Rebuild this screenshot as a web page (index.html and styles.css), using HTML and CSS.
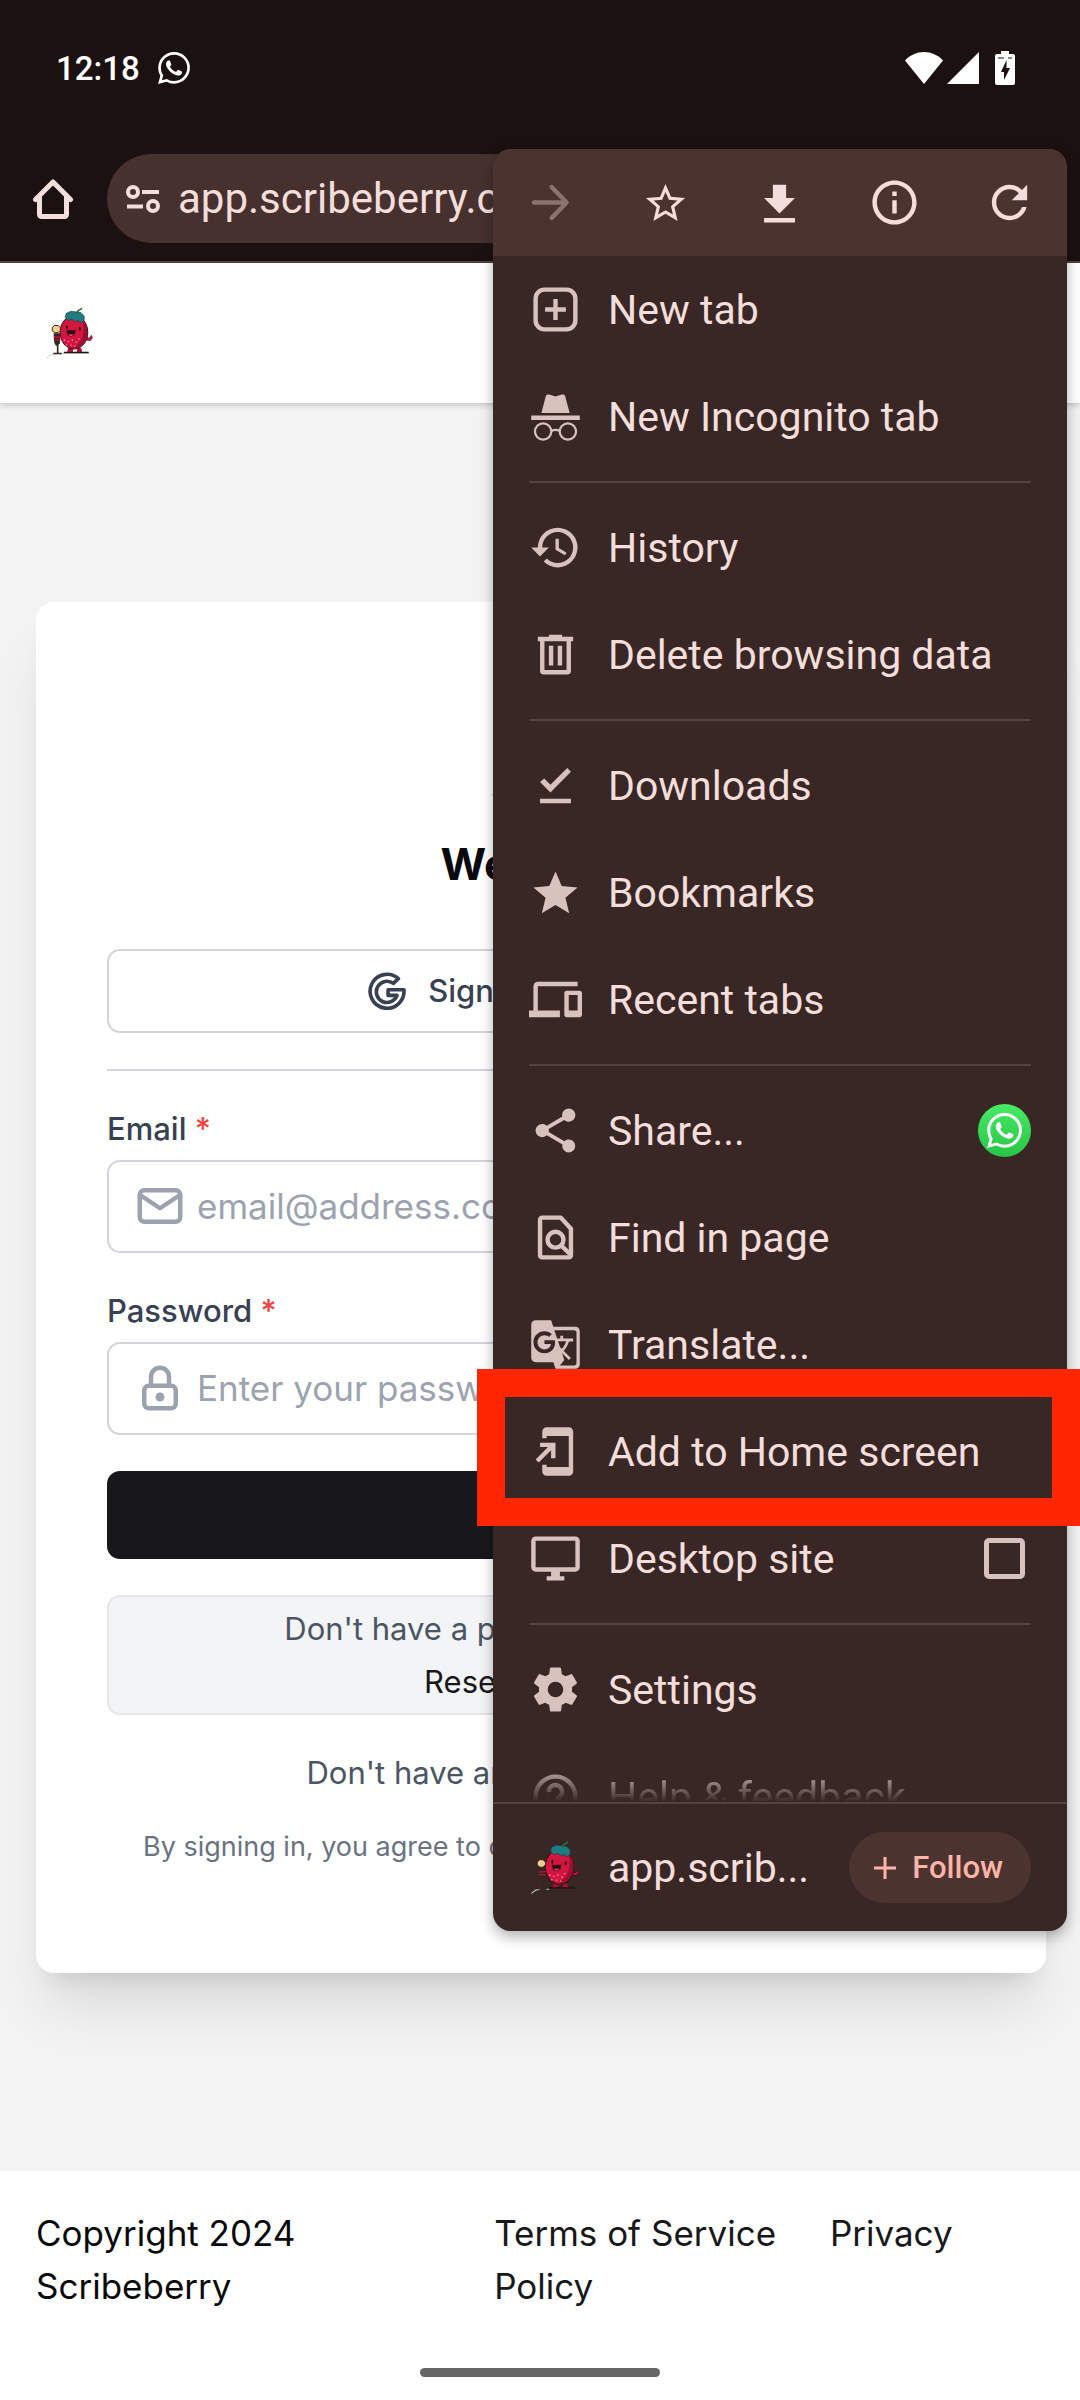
FILE: index.html
```html
<!DOCTYPE html>
<html lang="en">
<head>
  <meta charset="UTF-8">
  <meta name="viewport" content="width=device-width, initial-scale=1.0">
  <title>Scribeberry</title>
  <link rel="stylesheet" href="styles.css">
</head>
<body>
  <!-- shared drawings -->
  <svg class="symbols" width="0" height="0" aria-hidden="true">
    <symbol id="berry" viewBox="20 50 146 156">
      <path d="M22 204l12-9 14-3M64 192h10" stroke="#b9dccd" stroke-width="3" fill="none"/>
      <path d="M74 185h76v5H74z" fill="#24130f"/>
      <path d="M88 174h14v12H84zM114 174h13l3 12h-16z" fill="#a70f33"/>
      <path d="M140 140l12 4 6-9 3 8-6 8-16-2z" fill="#d3163f" stroke="#3a0c18" stroke-width="2"/>
      <ellipse cx="105" cy="126" rx="42" ry="51" fill="#d3163f" stroke="#3a0c18" stroke-width="3"/>
      <path d="M128 82c22 22 26 66-4 86-8 6-16 8-24 8 34-20 42-54 28-94z" fill="#9a1034"/>
      <path d="M78 80l4-12 14-6 16 2 14 2 10 10v14l-10 6-8-6-10 4-8-8-12 4-8-8z" fill="#207a80" stroke="#12404a" stroke-width="2"/>
      <path d="M112 68l6-8 12-7" stroke="#2d6b3c" stroke-width="5" fill="none"/>
      <path d="M81 106h5v10h-5zM120 111h6v9h-6z" fill="#24060f"/>
      <path d="M82 120h28l-2 12-10 7-12-4z" fill="#32060f"/>
      <path d="M88 132h16l-5 5-8-1z" fill="#e0486a"/>
      <path d="M74 148h4v4h-4zM86 152h4v4h-4zM98 148h4v4h-4zM110 154h4v4h-4zM80 162h4v4h-4zM94 163h4v4h-4zM106 166h4v4h-4zM118 144h4v4h-4z" fill="#f58b9b"/>
      <path d="M39 112l6-7h12l7 7v8l-7 7H46l-7-6z" fill="#efcf8b" stroke="#34231c" stroke-width="3"/>
      <path d="M43 129h21l-2 30-6 8h-6l-5-10z" fill="#35241f"/>
      <path d="M44 138h20v5H44zM44 147h20v4H44z" fill="#b51437"/>
      <path d="M53 165h5v23h10v5H42v-5h11z" fill="#35241f"/>
    </symbol>
    <symbol id="whatsapp" viewBox="0 0 24 24">
      <path d="M17.472 14.382c-.297-.149-1.758-.867-2.03-.967-.273-.099-.471-.148-.67.15-.197.297-.767.966-.94 1.164-.173.199-.347.223-.644.075-.297-.15-1.255-.463-2.39-1.475-.883-.788-1.48-1.761-1.653-2.059-.173-.297-.018-.458.13-.606.134-.133.298-.347.446-.52.149-.174.198-.298.298-.497.099-.198.05-.371-.025-.52-.075-.149-.669-1.612-.916-2.207-.242-.579-.487-.5-.669-.51-.173-.008-.371-.01-.57-.01-.198 0-.52.074-.792.372-.272.297-1.04 1.016-1.04 2.479 0 1.462 1.065 2.875 1.213 3.074.149.198 2.096 3.2 5.077 4.487.709.306 1.262.489 1.694.625.712.227 1.36.195 1.871.118.571-.085 1.758-.719 2.006-1.413.248-.694.248-1.289.173-1.413-.074-.124-.272-.198-.57-.347m-5.421 7.403h-.004a9.87 9.87 0 01-5.031-1.378l-.361-.214-3.741.982.998-3.648-.235-.374a9.86 9.86 0 01-1.51-5.26c.001-5.45 4.436-9.884 9.888-9.884 2.64 0 5.122 1.03 6.988 2.898a9.825 9.825 0 012.893 6.994c-.003 5.45-4.437 9.884-9.885 9.884m8.413-18.297A11.815 11.815 0 0012.05 0C5.495 0 .16 5.335.157 11.892c0 2.096.547 4.142 1.588 5.945L.057 24l6.305-1.654a11.882 11.882 0 005.683 1.448h.005c6.554 0 11.89-5.335 11.893-11.893a11.821 11.821 0 00-3.48-8.413Z"/>
    </symbol>
  </svg>

  <div class="status-bar">
    <span class="clock">12:18</span>
    <svg class="status-chat" width="32" height="32"><use href="#whatsapp"/></svg>
    <div class="status-icons">
      <svg width="38" height="32" viewBox="0 0 38 32"><path d="M19 32L0 8.500C5 3 12 0 19 0s14 3 19 8.500z"/></svg>
      <svg width="32" height="32" viewBox="0 0 32 32"><path d="M32 0v32H0z"/></svg>
      <svg class="battery" width="20" height="34" viewBox="0 0 20 34"><path fill-rule="evenodd" d="M6 0h8v3h4a2 2 0 0 1 2 2v27a2 2 0 0 1-2 2H2a2 2 0 0 1-2-2V5a2 2 0 0 1 2-2h4zM11.500 9L6 21h3v8l6-12h-3.500zM3 6.500v1h6v-1zM13 6.500v1h4v-1z"/></svg>
    </div>
  </div>

  <div class="toolbar">
    <button class="icon-button" aria-label="Home">
      <svg width="42" height="42" viewBox="0 0 42 42" fill="none" stroke="currentColor" stroke-width="5" stroke-linejoin="round" stroke-linecap="round"><path d="M3.500 21.500L21 4l17.500 17.500M7.500 18v18.500a2 2 0 0 0 2 2h23a2 2 0 0 0 2-2V18"/></svg>
    </button>
    <div class="omnibox">
      <svg width="34" height="28" viewBox="0 0 34 28" fill="none" stroke="currentColor" stroke-width="4"><circle cx="7" cy="7" r="5"/><path d="M16 7h17M1 21.500h16"/><circle cx="27" cy="21" r="5"/></svg>
      <input type="text" value="app.scribeberry.com" aria-label="Address">
    </div>
  </div>

  <header class="app-header">
    <svg width="48" height="52"><use href="#berry"/></svg>
  </header>

  <main>
    <form class="card">
      <svg class="card-logo" width="100" height="107"><use href="#berry"/></svg>
      <h1>Welcome</h1>

      <button type="button" class="google-button">
        <svg width="38" height="38" viewBox="0 0 24 24" fill="none" stroke="currentColor" stroke-width="2.300" stroke-linejoin="round"><path d="M19.200 4.200A10.700 10.700 0 1 0 22.700 11.200H12.700V14.800H18.300A6.700 6.700 0 1 1 16 7.200Z"/></svg>
        Sign in with Google
      </button>

      <hr>

      <div class="field">
        <label for="email">Email <span class="required">*</span></label>
        <div class="input-box">
          <svg width="54" height="54" viewBox="0 0 24 24" fill="none" stroke="currentColor" stroke-width="2" stroke-linejoin="round"><rect x="3" y="5" width="18" height="14" rx="2"/><path d="M3 7l9 6 9-6"/></svg>
          <input type="email" id="email" placeholder="email@address.com">
        </div>
      </div>

      <div class="field">
        <label for="password">Password <span class="required">*</span></label>
        <div class="input-box">
          <svg width="54" height="54" viewBox="0 0 24 24" fill="none" stroke="currentColor" stroke-width="2" stroke-linejoin="round"><rect x="5" y="11" width="14" height="10" rx="2"/><circle cx="12" cy="16" r="1"/><path d="M8 11V7a4 4 0 0 1 8 0v4"/></svg>
          <input type="password" id="password" placeholder="Enter your password">
        </div>
      </div>

      <button type="submit" class="submit-button">Sign in</button>

      <p class="reset-box">Don't have a password or forgot it?<br><a href="#">Reset password</a></p>
      <p class="sign-up">Don't have an account? <a href="#">Sign Up</a></p>
      <p class="terms">By signing in, you agree to our Terms and our Privacy Policies.</p>
    </form>
  </main>

  <footer>
    <p>Copyright 2024 Scribeberry</p>
    <p><a href="#" class="terms-link">Terms of Service</a> <a href="#">Privacy Policy</a></p>
  </footer>
  <div class="gesture-bar"><span></span></div>

  <div class="menu">
    <div class="menu-head">
      <button class="icon-button" aria-label="Forward" disabled>
        <svg width="53" height="53" viewBox="0 0 24 24" fill="none" stroke="currentColor" stroke-width="2" stroke-linecap="round" stroke-linejoin="round"><path d="M4.500 12H19M12.500 5l6.800 7-6.800 7"/></svg>
      </button>
      <button class="icon-button" aria-label="Bookmark">
        <svg width="47" height="47" viewBox="0 0 24 24"><path d="M22 9.740l-7.190-.62L12 2.500 9.190 9.130 2 9.740l5.460 4.730L5.820 21.500 12 17.770l6.180 3.730-1.630-7.030L22 9.740zM12 15.900l-3.760 2.270 1-4.280-3.320-2.880 4.380-.38L12 6.600l1.710 4.040 4.380.38-3.320 2.880 1 4.280L12 15.900z"/></svg>
      </button>
      <button class="icon-button" aria-label="Download">
        <svg width="53" height="53" viewBox="0 0 24 24"><path d="M19 10h-4V4H9v6H5l7 7zM5 19v2h14v-2z"/></svg>
      </button>
      <button class="icon-button" aria-label="Page info">
        <svg width="53" height="53" viewBox="0 0 24 24"><path d="M11 17h2v-6h-2v6zm1-15C6.480 2 2 6.480 2 12s4.480 10 10 10 10-4.480 10-10S17.520 2 12 2zm0 18c-4.410 0-8-3.590-8-8s3.590-8 8-8 8 3.590 8 8-3.590 8-8 8zM11 9h2V7h-2v2z"/></svg>
      </button>
      <button class="icon-button" aria-label="Reload">
        <svg width="53" height="53" viewBox="0 0 24 24"><path d="M17.650 6.350C16.200 4.900 14.210 4 12 4c-4.420 0-7.990 3.580-7.990 8s3.570 8 7.990 8c3.730 0 6.840-2.550 7.730-6h-2.080c-.82 2.330-3.040 4-5.650 4-3.310 0-6-2.690-6-6s2.690-6 6-6c1.660 0 3.140.69 4.220 1.780L13 11h7V4l-2.350 2.350z"/></svg>
      </button>
    </div>

    <button class="menu-item">
      <svg class="item-icon" viewBox="0 0 24 24" fill="none" stroke="currentColor" stroke-width="2"><rect x="3" y="3" width="18" height="18" rx="4"/><path d="M12 7.300v9.400M7.300 12h9.400"/></svg>
      <span>New tab</span>
    </button>
    <button class="menu-item">
      <svg class="item-icon" viewBox="0 0 24 24"><path d="M8.300 2h.8l2.900.9 2.900-.9h.8l.6.500 2.100 7.900H5.600l2.100-7.900zM1 11.600h22v2H1z"/><g fill="none" stroke="currentColor"><circle cx="6.400" cy="18.800" r="3.700"/><circle cx="17.600" cy="18.800" r="3.700"/><path d="M10.100 18.600q1.900-1 3.800 0"/></g></svg>
      <span>New Incognito tab</span>
    </button>
    <hr>
    <button class="menu-item">
      <svg class="item-icon" viewBox="0 0 24 24"><path d="M13 3a9 9 0 0 0-9 9H1l3.960 4.030L9 12H6c0-3.870 3.130-7 7-7s7 3.130 7 7-3.130 7-7 7c-1.930 0-3.680-.79-4.940-2.060l-1.420 1.420A8.950 8.950 0 0 0 13 21a9 9 0 0 0 0-18zm-1 5v5l4.280 2.540.72-1.210-3.500-2.080V8H12z"/></svg>
      <span>History</span>
    </button>
    <button class="menu-item">
      <svg class="item-icon" viewBox="0 0 24 24"><path fill-rule="evenodd" d="M9 3h6v1h5v2h-1v13.500a1.500 1.500 0 0 1-1.500 1.500h-11A1.500 1.500 0 0 1 5 19.500V6H4V4h5zM7 6v13h10V6zM9 8h2v9H9zM13 8h2v9h-2z"/></svg>
      <span>Delete browsing data</span>
    </button>
    <hr>
    <button class="menu-item">
      <svg class="item-icon" viewBox="0 0 24 24"><path d="M5 10.400l1.900-1.600 2.800 2.900 7.600-7.600 1.700 1.700-9.300 9.400zM5 18h14v2H5z"/></svg>
      <span>Downloads</span>
    </button>
    <button class="menu-item">
      <svg class="item-icon" viewBox="0 0 24 24"><path d="M12 17.700l6.200 3.700-1.700-7L22 9.700l-7.200-.6L12 2.500 9.200 9.100 2 9.700l5.500 4.700-1.700 7z"/></svg>
      <span>Bookmarks</span>
    </button>
    <button class="menu-item">
      <svg class="item-icon" viewBox="0 0 24 24"><path d="M4 6h18V4H4c-1.100 0-2 .9-2 2v11H0v3h14v-3H4V6zm19 2h-6c-.55 0-1 .45-1 1v10c0 .55.45 1 1 1h6c.55 0 1-.45 1-1V9c0-.55-.45-1-1-1zm-1 9h-4v-7h4v7z"/></svg>
      <span>Recent tabs</span>
    </button>
    <hr>
    <button class="menu-item">
      <svg class="item-icon" viewBox="0 0 24 24"><path d="M18 16.080c-.76 0-1.440.3-1.960.77L8.910 12.700c.05-.23.09-.46.09-.7s-.04-.47-.09-.7l7.050-4.110c.54.5 1.250.81 2.040.81 1.660 0 3-1.340 3-3s-1.340-3-3-3-3 1.340-3 3c0 .24.04.47.09.7L8.040 9.810C7.500 9.310 6.790 9 6 9c-1.660 0-3 1.340-3 3s1.340 3 3 3c.79 0 1.500-.31 2.040-.81l7.120 4.160c-.05.21-.08.43-.08.65 0 1.610 1.310 2.920 2.920 2.920s2.920-1.310 2.920-2.920-1.310-2.920-2.920-2.920z"/></svg>
      <span>Share...</span>
      <i class="share-target"><svg width="35" height="35"><use href="#whatsapp"/></svg></i>
    </button>
    <button class="menu-item">
      <svg class="item-icon" viewBox="0 0 24 24" fill="none" stroke="currentColor" stroke-width="2"><path d="M14.400 3H6a1 1 0 0 0-1 1v16a1 1 0 0 0 1 1h12a1 1 0 0 0 1-1V8z" stroke-linejoin="round"/><circle cx="12" cy="13" r="3.600"/><path d="M14.500 15.500l4 4"/></svg>
      <span>Find in page</span>
    </button>
    <button class="menu-item">
      <svg class="item-icon" viewBox="0 0 24 24"><path d="M21 4H11l-1-3H3c-1.100 0-2 .9-2 2v15c0 1.100.9 2 2 2h8l1 3h9c1.100 0 2-.9 2-2V6c0-1.100-.9-2-2-2zM7 16c-2.760 0-5-2.240-5-5s2.240-5 5-5c1.350 0 2.480.5 3.350 1.300L9.030 8.570c-.38-.36-1.040-.78-2.030-.78-1.740 0-3.150 1.440-3.150 3.210S5.260 14.210 7 14.210c2.010 0 2.840-1.440 2.920-2.410H7v-1.710h4.680c.07.31.12.61.12 1.020C11.800 13.970 9.890 16 7 16zm6.170-5.420h3.700c-.43 1.250-1.110 2.430-2.050 3.470-.31-.35-.6-.72-.86-1.100l-.79-2.370zm8.330 9.920c0 .55-.45 1-1 1H14l2-2.500-1.040-3.100 3.100 3.100.92-.92-3.300-3.250.02-.02c1.130-1.250 1.930-2.690 2.400-4.220H20v-1.300h-4.530V8h-1.290v1.290h-1.440L11.460 5.500h9.040c.55 0 1 .45 1 1v14z"/></svg>
      <span>Translate...</span>
    </button>
    <button class="menu-item highlighted">
      <svg class="item-icon" viewBox="0 0 24 24"><path d="M18 1H8c-1.100 0-2 .9-2 2v3h2V5h10v14H8v-1H6v3c0 1.100.9 2 2 2h10c1.100 0 2-.9 2-2V3c0-1.100-.9-2-2-2zM10 15h2V8H5v2h3.590L3 15.590 4.410 17 10 11.410z"/></svg>
      <span>Add to Home screen</span>
    </button>
    <label class="menu-item">
      <svg class="item-icon" viewBox="0 0 24 24"><path d="M21 2H3c-1.100 0-2 .9-2 2v12c0 1.100.9 2 2 2h7v2H8v2h8v-2h-2v-2h7c1.100 0 2-.9 2-2V4c0-1.100-.9-2-2-2zm0 14H3V4h18v12z"/></svg>
      <span>Desktop site</span>
      <input type="checkbox">
    </label>
    <hr>
    <button class="menu-item">
      <svg class="item-icon" viewBox="0 0 24 24"><path d="M19.430 12.980c.04-.32.07-.64.07-.98s-.03-.66-.07-.98l2.110-1.650c.19-.15.24-.42.12-.64l-2-3.460c-.12-.22-.39-.3-.61-.22l-2.490 1c-.52-.4-1.080-.73-1.690-.98l-.38-2.650C14.460 2.180 14.250 2 14 2h-4c-.25 0-.46.18-.49.42l-.38 2.650c-.61.25-1.170.59-1.690.98l-2.490-1c-.23-.09-.49 0-.61.22l-2 3.460c-.13.22-.07.49.12.64l2.110 1.650c-.04.32-.07.65-.07.98s.03.66.07.98l-2.110 1.650c-.19.15-.24.42-.12.64l2 3.460c.12.22.39.3.61.22l2.490-1c.52.4 1.080.73 1.690.98l.38 2.650c.03.24.24.42.49.42h4c.25 0 .46-.18.49-.42l.38-2.650c.61-.25 1.170-.59 1.690-.98l2.490 1c.23.09.49 0 .61-.22l2-3.460c.12-.22.07-.49-.12-.64l-2.110-1.650zM12 15.500c-1.930 0-3.500-1.570-3.500-3.500s1.570-3.500 3.500-3.500 3.500 1.570 3.500 3.500-1.570 3.500-3.500 3.500z"/></svg>
      <span>Settings</span>
    </button>
    <div class="menu-fade">
      <button class="menu-item">
        <svg class="item-icon" viewBox="0 0 24 24" fill="none" stroke="currentColor" stroke-width="2"><circle cx="12" cy="12" r="9"/><path d="M9 10a3 3 0 1 1 5 2c-1 .8-2 1.400-2 3"/></svg>
        <span>Help &amp; feedback</span>
      </button>
    </div>

    <div class="menu-foot">
      <svg class="item-icon" viewBox="20 50 146 156"><use href="#berry" x="20" y="50" width="146" height="156"/></svg>
      <span>app.scrib...</span>
      <button class="follow">
        <svg width="22" height="22" viewBox="0 0 22 22" stroke="currentColor" stroke-width="3"><path d="M11 0v22M0 11h22"/></svg>
        Follow
      </button>
    </div>
  </div>
</body>
</html>
```
FILE: styles.css
```css
:root {
  --chrome: #1b1110;
  --menu: #382725;
  --menu-head: #4b332f;
  --menu-line: #534341;
  --menu-text: #f4dedb;
  --menu-icon: #d8c2be;
  --border: #d1d5db;
  --ink: #374151;
}

* {
  box-sizing: border-box;
}

body {
  position: relative;
  margin: 0;
  min-height: 100vh;
  display: flex;
  flex-direction: column;
  background-color: #f3f3f3;
  font-family: Inter, sans-serif;
  font-size: 31px;
}

button,
input {
  font: inherit;
  color: inherit;
  background: none;
  border: none;
  padding: 0;
}

h1,
p {
  margin: 0;
}

a {
  color: #18181b;
  text-decoration: none;
}

svg {
  flex: none;
  fill: currentColor;
}

svg[fill="none"],
svg g[fill="none"] {
  fill: none;
}

.symbols {
  position: absolute;
}

/* browser chrome */
.status-bar {
  height: 136px;
  padding: 0 65px 0 56px;
  display: flex;
  align-items: center;
  gap: 18px;
  background-color: var(--chrome);
  color: #fff;
}

.clock {
  font-family: Roboto, sans-serif;
  font-size: 33px;
  font-weight: 500;
}

.status-icons {
  margin-left: auto;
  display: flex;
  align-items: center;
  gap: 4px;
}

.battery {
  margin-left: 12px;
}

.toolbar {
  padding: 18px 24px 18px 32px;
  display: flex;
  align-items: center;
  gap: 33px;
  background-color: var(--chrome);
  border-bottom: 2px solid var(--menu-line);
  color: var(--menu-text);
}

.icon-button {
  display: flex;
  align-items: center;
  justify-content: center;
}

.icon-button:disabled {
  color: #8b7370;
}

.omnibox {
  flex: 1;
  height: 89px;
  padding: 0 19px;
  display: flex;
  align-items: center;
  gap: 18px;
  background-color: #46312f;
  border-radius: 45px;
}

.omnibox input {
  flex: 1;
  font-family: Roboto, sans-serif;
  font-size: 42px;
}

/* page */
.app-header {
  height: 140px;
  padding: 0 46px;
  display: flex;
  align-items: center;
  background-color: #fff;
  box-shadow: 0 2px 6px rgba(0, 0, 0, 0.2);
}

main {
  flex: 1;
  padding: 36px 34px 36px 36px;
  display: flex;
  align-items: center;
}

.card {
  flex: 1;
  padding: 88px 71px 110px;
  display: flex;
  flex-direction: column;
  gap: 36px;
  background-color: #fff;
  border-radius: 18px;
  box-shadow: 0 44px 55px -11px rgba(0, 0, 0, 0.1), 0 18px 22px -13px rgba(0, 0, 0, 0.1);
  color: #4b5563;
  text-align: center;
}

.card-logo {
  align-self: center;
}

h1 {
  margin-bottom: 18px;
  font-size: 44px;
  line-height: 62px;
  font-weight: 700;
  color: #09090b;
}

.google-button {
  height: 84px;
  display: flex;
  align-items: center;
  justify-content: center;
  gap: 22px;
  border: 2px solid var(--border);
  border-radius: 13px;
  font-weight: 500;
  color: var(--ink);
}

.card hr {
  width: 100%;
  margin: 0;
  border: none;
  border-top: 2px solid var(--border);
}

.field {
  display: flex;
  flex-direction: column;
  gap: 10px;
  text-align: left;
}

.field label {
  line-height: 43px;
  font-weight: 500;
  color: var(--ink);
}

.required {
  color: #ef4444;
}

.input-box {
  height: 93px;
  padding: 0 24px;
  display: flex;
  align-items: center;
  gap: 10px;
  border: 2px solid var(--border);
  border-radius: 13px;
  color: #9ca3af;
}

.input-box input {
  flex: 1;
  font-size: 35px;
}

.input-box input::placeholder {
  color: #9ca3af;
}

.submit-button {
  height: 88px;
  border-radius: 13px;
  background-color: #18181b;
  color: #fff;
  font-weight: 500;
}

.reset-box {
  padding: 5px 4px;
  line-height: 53px;
  background-color: #f3f4f6;
  border: 2px solid #e5e7eb;
  border-radius: 13px;
}

.sign-up {
  line-height: 44px;
}

.terms {
  font-size: 27px;
  line-height: 32px;
  color: #6b7280;
}

footer {
  padding: 36px 36px 32px;
  display: grid;
  grid-template-columns: 5fr 6fr;
  background-color: #fff;
  font-size: 35px;
  line-height: 53px;
  color: #09090b;
}

.terms-link {
  margin-right: 44px;
}

.gesture-bar {
  height: 55px;
  display: flex;
  align-items: center;
  justify-content: center;
  background-color: #fff;
}

.gesture-bar span {
  width: 240px;
  height: 9px;
  border-radius: 5px;
  background-color: #666;
}

/* overflow menu, opened over the page */
.menu {
  position: absolute;
  top: 149px;
  right: 13px;
  width: 574px;
  background-color: var(--menu);
  border-radius: 18px;
  box-shadow: 0 6px 14px rgba(0, 0, 0, 0.3);
  color: var(--menu-text);
  font-family: Roboto, sans-serif;
  font-size: 41px;
}

.menu-head {
  height: 107px;
  display: grid;
  grid-template-columns: repeat(5, 1fr);
  background-color: var(--menu-head);
  border-radius: 18px 18px 0 0;
}

.menu-item {
  position: relative;
  width: 100%;
  height: 107px;
  padding: 0 36px;
  display: flex;
  align-items: center;
  gap: 26px;
  text-align: left;
}

.menu-item span,
.menu-foot span {
  flex: 1;
  white-space: nowrap;
}

.item-icon {
  width: 53px;
  height: 53px;
  color: var(--menu-icon);
}

.menu hr {
  margin: 11px 36px;
  border: none;
  border-top: 2px solid var(--menu-line);
}

.share-target {
  width: 53px;
  height: 53px;
  display: flex;
  align-items: center;
  justify-content: center;
  border-radius: 50%;
  background: linear-gradient(#48ea66, #27c446);
  color: #fff;
}

.menu-item input {
  appearance: none;
  width: 41px;
  height: 41px;
  margin: 0 6px;
  border: 5px solid var(--menu-icon);
  border-radius: 5px;
}

.highlighted::after {
  content: "";
  position: absolute;
  z-index: 1;
  inset: -29px -13px -21px -16px;
  border: 28px solid #ff2600;
}

.menu-fade {
  height: 59px;
  overflow: hidden;
  mask-image: linear-gradient(#000 20px, transparent);
}

.menu-foot {
  height: 129px;
  padding: 0 36px;
  display: flex;
  align-items: center;
  gap: 26px;
  border-top: 2px solid var(--menu-line);
}

.follow {
  height: 71px;
  padding: 0 28px 0 25px;
  display: flex;
  align-items: center;
  gap: 16px;
  border-radius: 36px;
  background-color: var(--menu-head);
  color: #ffb4a8;
  font-size: 31px;
  font-weight: 500;
}
```
